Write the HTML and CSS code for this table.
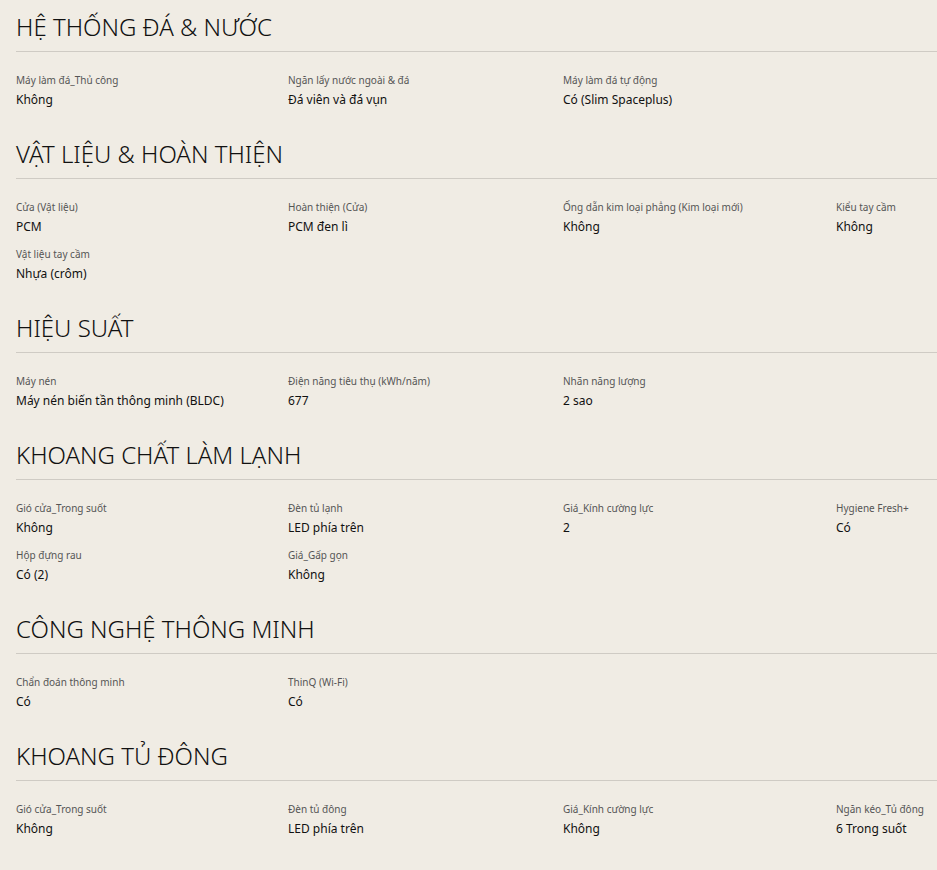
FILE: index.html
```html
<!DOCTYPE html>
<html lang="vi">
<head>
<meta charset="utf-8">
<title>Thông số kỹ thuật</title>
<link rel="stylesheet" href="styles.css">
</head>
<body>
<main class="specs">
  <section class="spec-group">
    <h2 class="spec-title">HỆ THỐNG ĐÁ &amp; NƯỚC</h2>
    <div class="spec-grid">
      <div class="spec-item"><div class="spec-label">Máy làm đá_Thủ công</div><div class="spec-value">Không</div></div>
      <div class="spec-item"><div class="spec-label">Ngăn lấy nước ngoài &amp; đá</div><div class="spec-value">Đá viên và đá vụn</div></div>
      <div class="spec-item"><div class="spec-label">Máy làm đá tự động</div><div class="spec-value">Có (Slim Spaceplus)</div></div>
    </div>
  </section>
  <section class="spec-group">
    <h2 class="spec-title">VẬT LIỆU &amp; HOÀN THIỆN</h2>
    <div class="spec-grid">
      <div class="spec-item"><div class="spec-label">Cửa (Vật liệu)</div><div class="spec-value">PCM</div></div>
      <div class="spec-item"><div class="spec-label">Hoàn thiện (Cửa)</div><div class="spec-value">PCM đen lì</div></div>
      <div class="spec-item"><div class="spec-label">Ống dẫn kim loại phẳng (Kim loại mới)</div><div class="spec-value">Không</div></div>
      <div class="spec-item"><div class="spec-label">Kiểu tay cầm</div><div class="spec-value">Không</div></div>
      <div class="spec-item"><div class="spec-label">Vật liệu tay cầm</div><div class="spec-value">Nhựa (crôm)</div></div>
    </div>
  </section>
  <section class="spec-group">
    <h2 class="spec-title">HIỆU SUẤT</h2>
    <div class="spec-grid">
      <div class="spec-item"><div class="spec-label">Máy nén</div><div class="spec-value">Máy nén biến tần thông minh (BLDC)</div></div>
      <div class="spec-item"><div class="spec-label">Điện năng tiêu thụ (kWh/năm)</div><div class="spec-value">677</div></div>
      <div class="spec-item"><div class="spec-label">Nhãn năng lượng</div><div class="spec-value">2 sao</div></div>
    </div>
  </section>
  <section class="spec-group">
    <h2 class="spec-title">KHOANG CHẤT LÀM LẠNH</h2>
    <div class="spec-grid">
      <div class="spec-item"><div class="spec-label">Gió cửa_Trong suốt</div><div class="spec-value">Không</div></div>
      <div class="spec-item"><div class="spec-label">Đèn tủ lạnh</div><div class="spec-value">LED phía trên</div></div>
      <div class="spec-item"><div class="spec-label">Giá_Kính cường lực</div><div class="spec-value">2</div></div>
      <div class="spec-item"><div class="spec-label">Hygiene Fresh+</div><div class="spec-value">Có</div></div>
      <div class="spec-item"><div class="spec-label">Hộp đựng rau</div><div class="spec-value">Có (2)</div></div>
      <div class="spec-item"><div class="spec-label">Giá_Gấp gọn</div><div class="spec-value">Không</div></div>
    </div>
  </section>
  <section class="spec-group">
    <h2 class="spec-title">CÔNG NGHỆ THÔNG MINH</h2>
    <div class="spec-grid">
      <div class="spec-item"><div class="spec-label">Chẩn đoán thông minh</div><div class="spec-value">Có</div></div>
      <div class="spec-item"><div class="spec-label">ThinQ (Wi-Fi)</div><div class="spec-value">Có</div></div>
    </div>
  </section>
  <section class="spec-group">
    <h2 class="spec-title">KHOANG TỦ ĐÔNG</h2>
    <div class="spec-grid">
      <div class="spec-item"><div class="spec-label">Gió cửa_Trong suốt</div><div class="spec-value">Không</div></div>
      <div class="spec-item"><div class="spec-label">Đèn tủ đông</div><div class="spec-value">LED phía trên</div></div>
      <div class="spec-item"><div class="spec-label">Giá_Kính cường lực</div><div class="spec-value">Không</div></div>
      <div class="spec-item"><div class="spec-label">Ngăn kéo_Tủ đông</div><div class="spec-value">6 Trong suốt</div></div>
    </div>
  </section>
</main>
</body>
</html>
```

FILE: styles.css
```css
html, body {
  margin: 0;
  padding: 0;
  background: #f0ece4;
  overflow: hidden;
}

body {
  font-family: "Noto Sans", "Open Sans", sans-serif;
  color: #111;
}

.specs {
  padding: 11px 0 0 16px;
}

.spec-group {
  margin-bottom: 29px;
}

.spec-title {
  margin: 0;
  padding-bottom: 8px;
  border-bottom: 1px solid #cfcbc4;
  font-size: 24px;
  line-height: 32px;
  font-weight: 300;
  color: #111;
}

.spec-grid {
  display: grid;
  grid-template-columns: 272px 275px 273px 273px;
  row-gap: 11px;
  padding-top: 21px;
}

.spec-label {
  font-size: 10px;
  line-height: 14px;
  color: #555;
  margin-bottom: 4px;
  white-space: nowrap;
}

.spec-value {
  font-size: 12px;
  line-height: 18px;
  color: #111;
  white-space: nowrap;
}
```
